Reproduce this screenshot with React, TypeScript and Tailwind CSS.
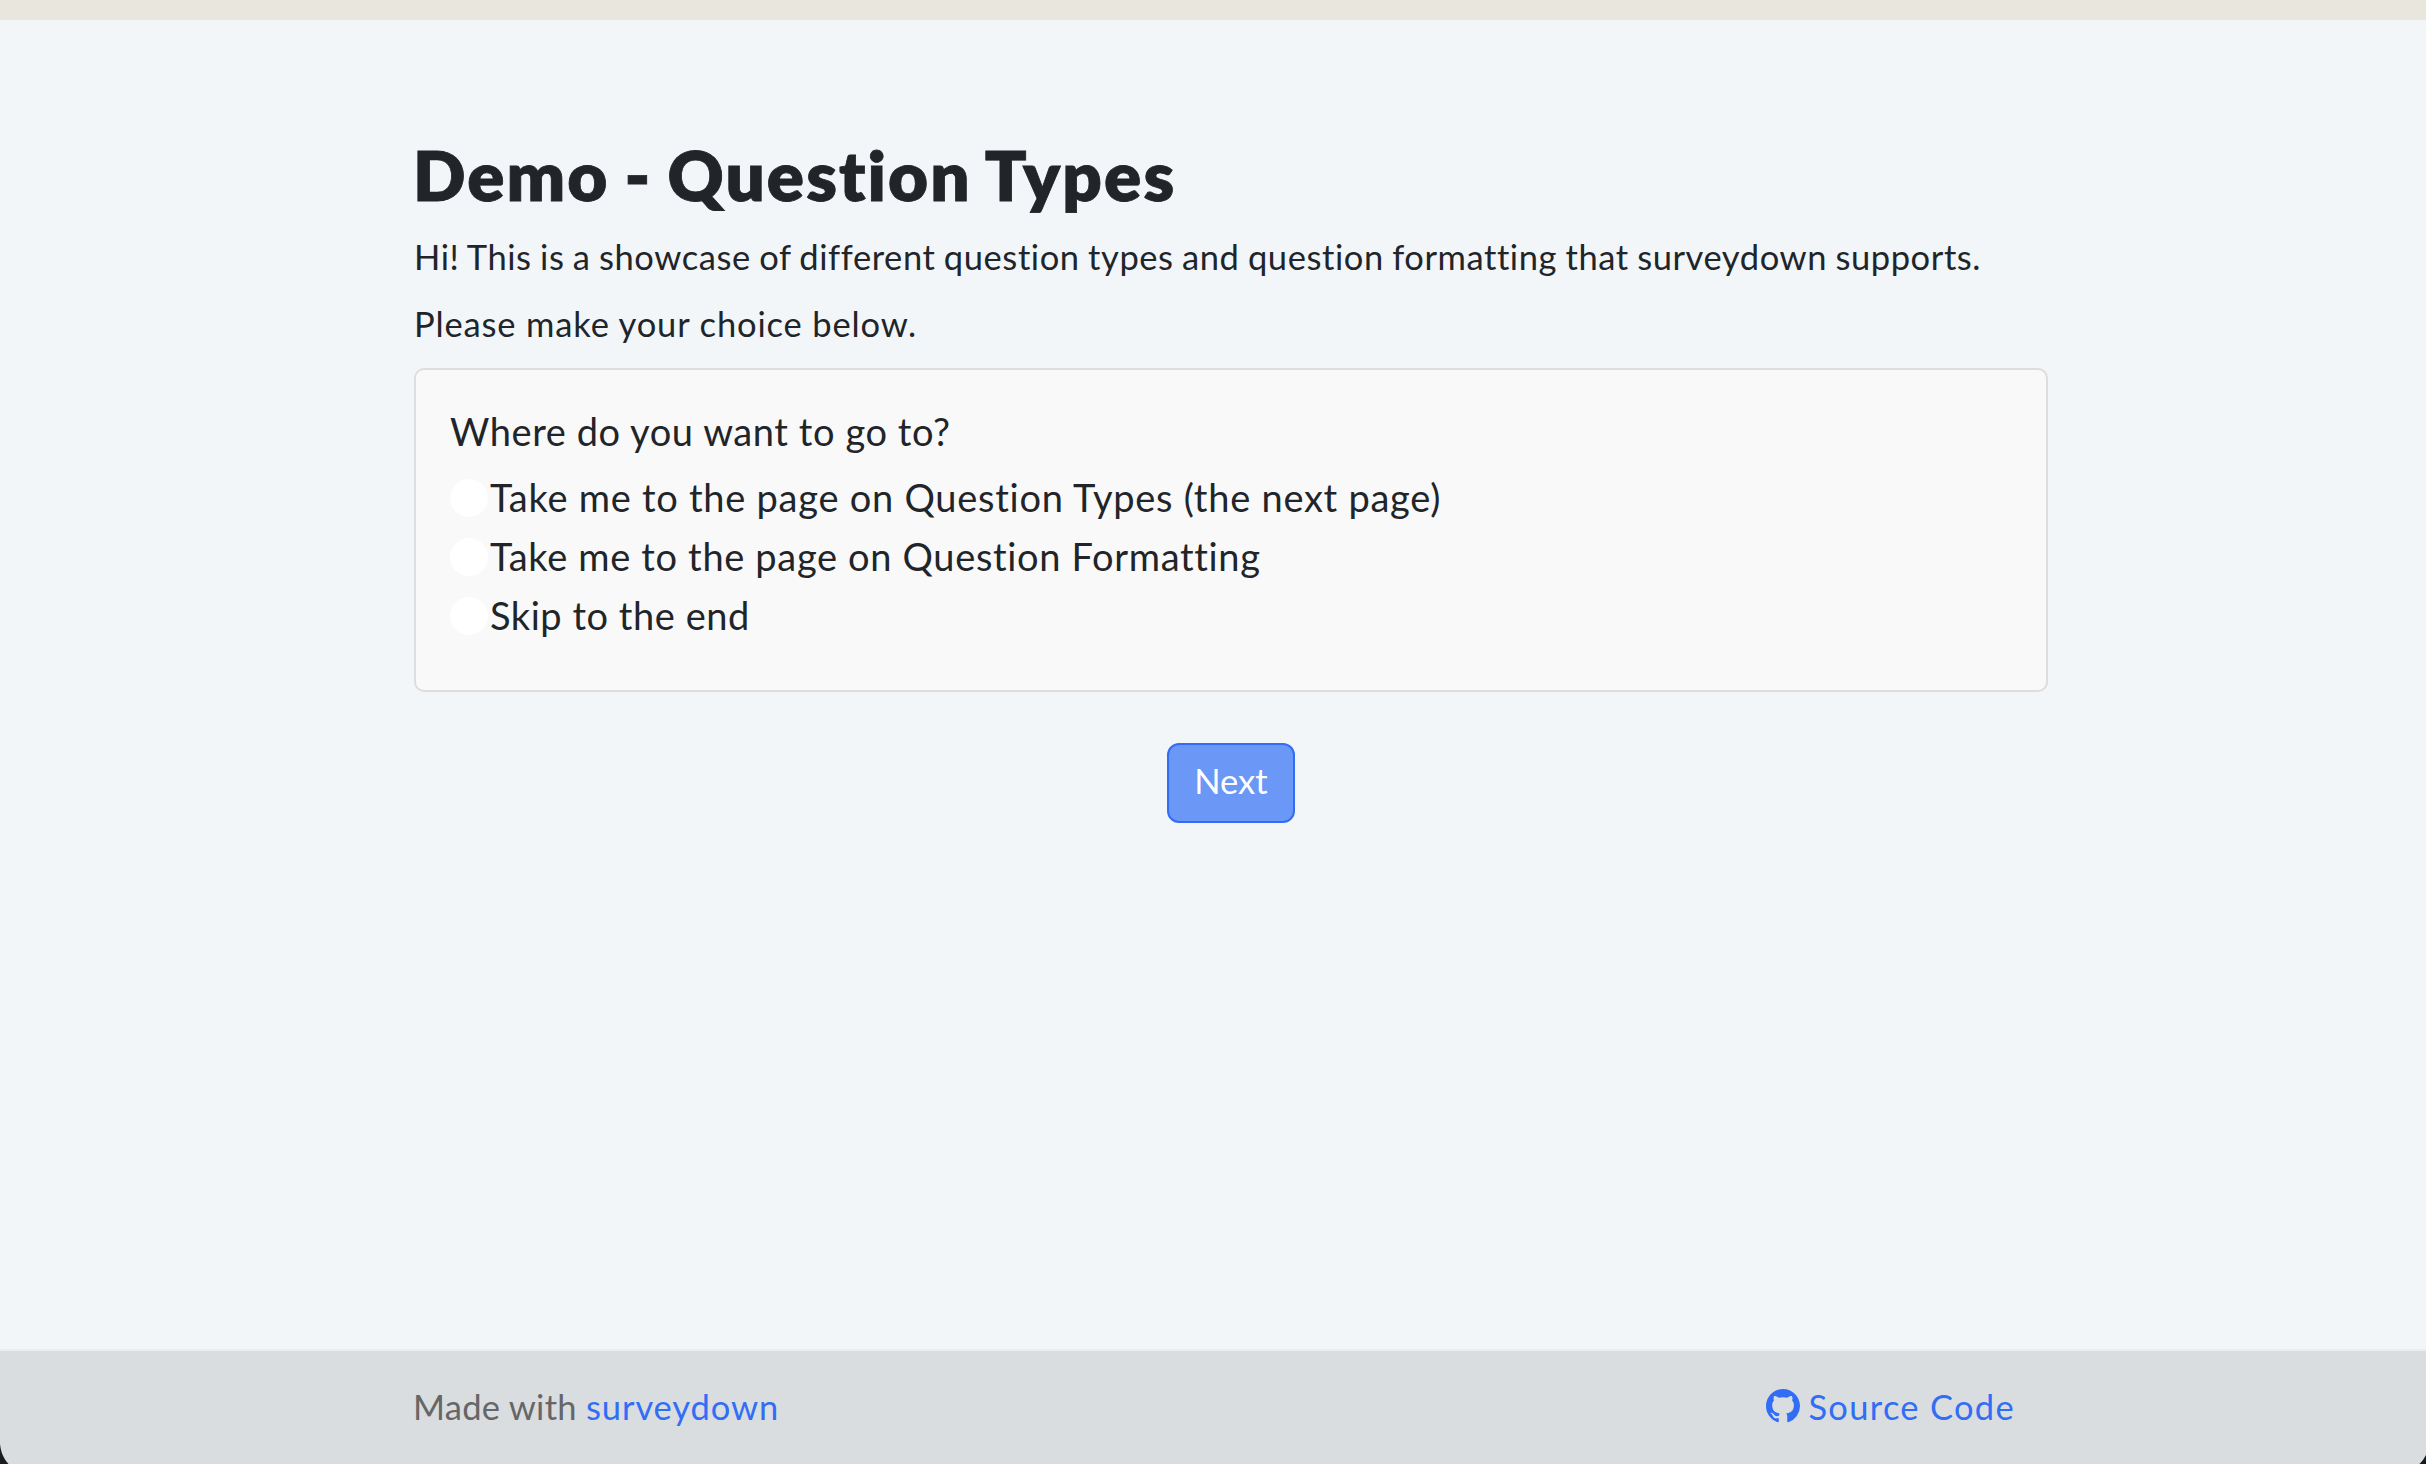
import { BsGithub } from "react-icons/bs";

const options = [
  { label: "Take me to the page on Question Types (the next page)", spacing: "tracking-[0.74px]" },
  { label: "Take me to the page on Question Formatting", spacing: "tracking-[0.66px]" },
  { label: "Skip to the end", spacing: "tracking-[0.54px]" },
];

function QuestionCard() {
  return (
    <section className="mt-[19px] h-[324px] rounded-[10px] border-2 border-[#dddddd] bg-[#f9f9f9] pl-[34px] pt-8 text-[38px]">
      <p className="leading-[58px] tracking-[0.58px]">Where do you want to go to?</p>
      <div className="mt-2" role="radiogroup">
        {options.map((o) => (
          <label key={o.label} className="flex h-[59px] items-start">
            <span className="mt-[11px] size-[38px] shrink-0 rounded-full bg-white" />
            <span className={`ml-0.5 leading-[59px] ${o.spacing}`}>{o.label}</span>
          </label>
        ))}
      </div>
    </section>
  );
}

function Footer() {
  return (
    <footer className="relative flex h-[115px] shrink-0 border-t-2 border-[#ededed] bg-[#d9dde0] pt-[30px]">
      <div className="ml-[413px] flex w-[1602px] items-start justify-between leading-[51px]">
        <p className="text-[#666666]">
          <span className="tracking-[0.28px]">Made with </span>
          <a className="tracking-[0.9px] text-[#326df5]">surveydown</a>
        </p>
        <a className="flex text-[#326df5]">
          <BsGithub className="mt-2 size-[34px]" />
          <span className="ml-2 tracking-[1.3px]">Source Code</span>
        </a>
      </div>
      <svg className="absolute bottom-0 left-0" width="9" height="22" viewBox="0 0 9 22">
        <path d="M0 2C1 11 4 17 8.5 22H0Z" fill="#1b1c20" />
      </svg>
      <svg className="absolute bottom-0 right-0" width="7" height="9" viewBox="0 0 7 9">
        <path d="M7 0Q4.5 5 0.5 9H7Z" fill="#16191d" />
      </svg>
    </footer>
  );
}

export default function App() {
  return (
    <div className="flex h-[1464px] w-full flex-col overflow-hidden bg-[#f2f6f9] font-['Lato',sans-serif] text-[34.5px] text-[#212529]">
      <div className="h-5 shrink-0 bg-[#e9e7dd]" />
      <main className="ml-[414px] w-[1634px] flex-1 pt-[117px]">
        <h1 className="-ml-px text-[69px] font-extrabold leading-[76px] tracking-[2.1px] [-webkit-text-stroke:0.8px_#212529] [word-spacing:-3px]">
          Demo - Question Types
        </h1>
        <p className="mt-[18px] whitespace-nowrap leading-[51px] tracking-[0.58px] [word-spacing:-1px]">
          Hi! This is a showcase of different question types and question formatting that surveydown supports.
        </p>
        <p className="mt-4 leading-[51px] tracking-[0.85px]">Please make your choice below.</p>
        <QuestionCard />
        <div className="mt-[51px] flex justify-center">
          <button className="flex h-20 w-32 items-start justify-center rounded-xl border-2 border-[#326df5] bg-[#6b97f6] pt-[11px] leading-[50px] text-white">
            Next
          </button>
        </div>
      </main>
      <Footer />
    </div>
  );
}
